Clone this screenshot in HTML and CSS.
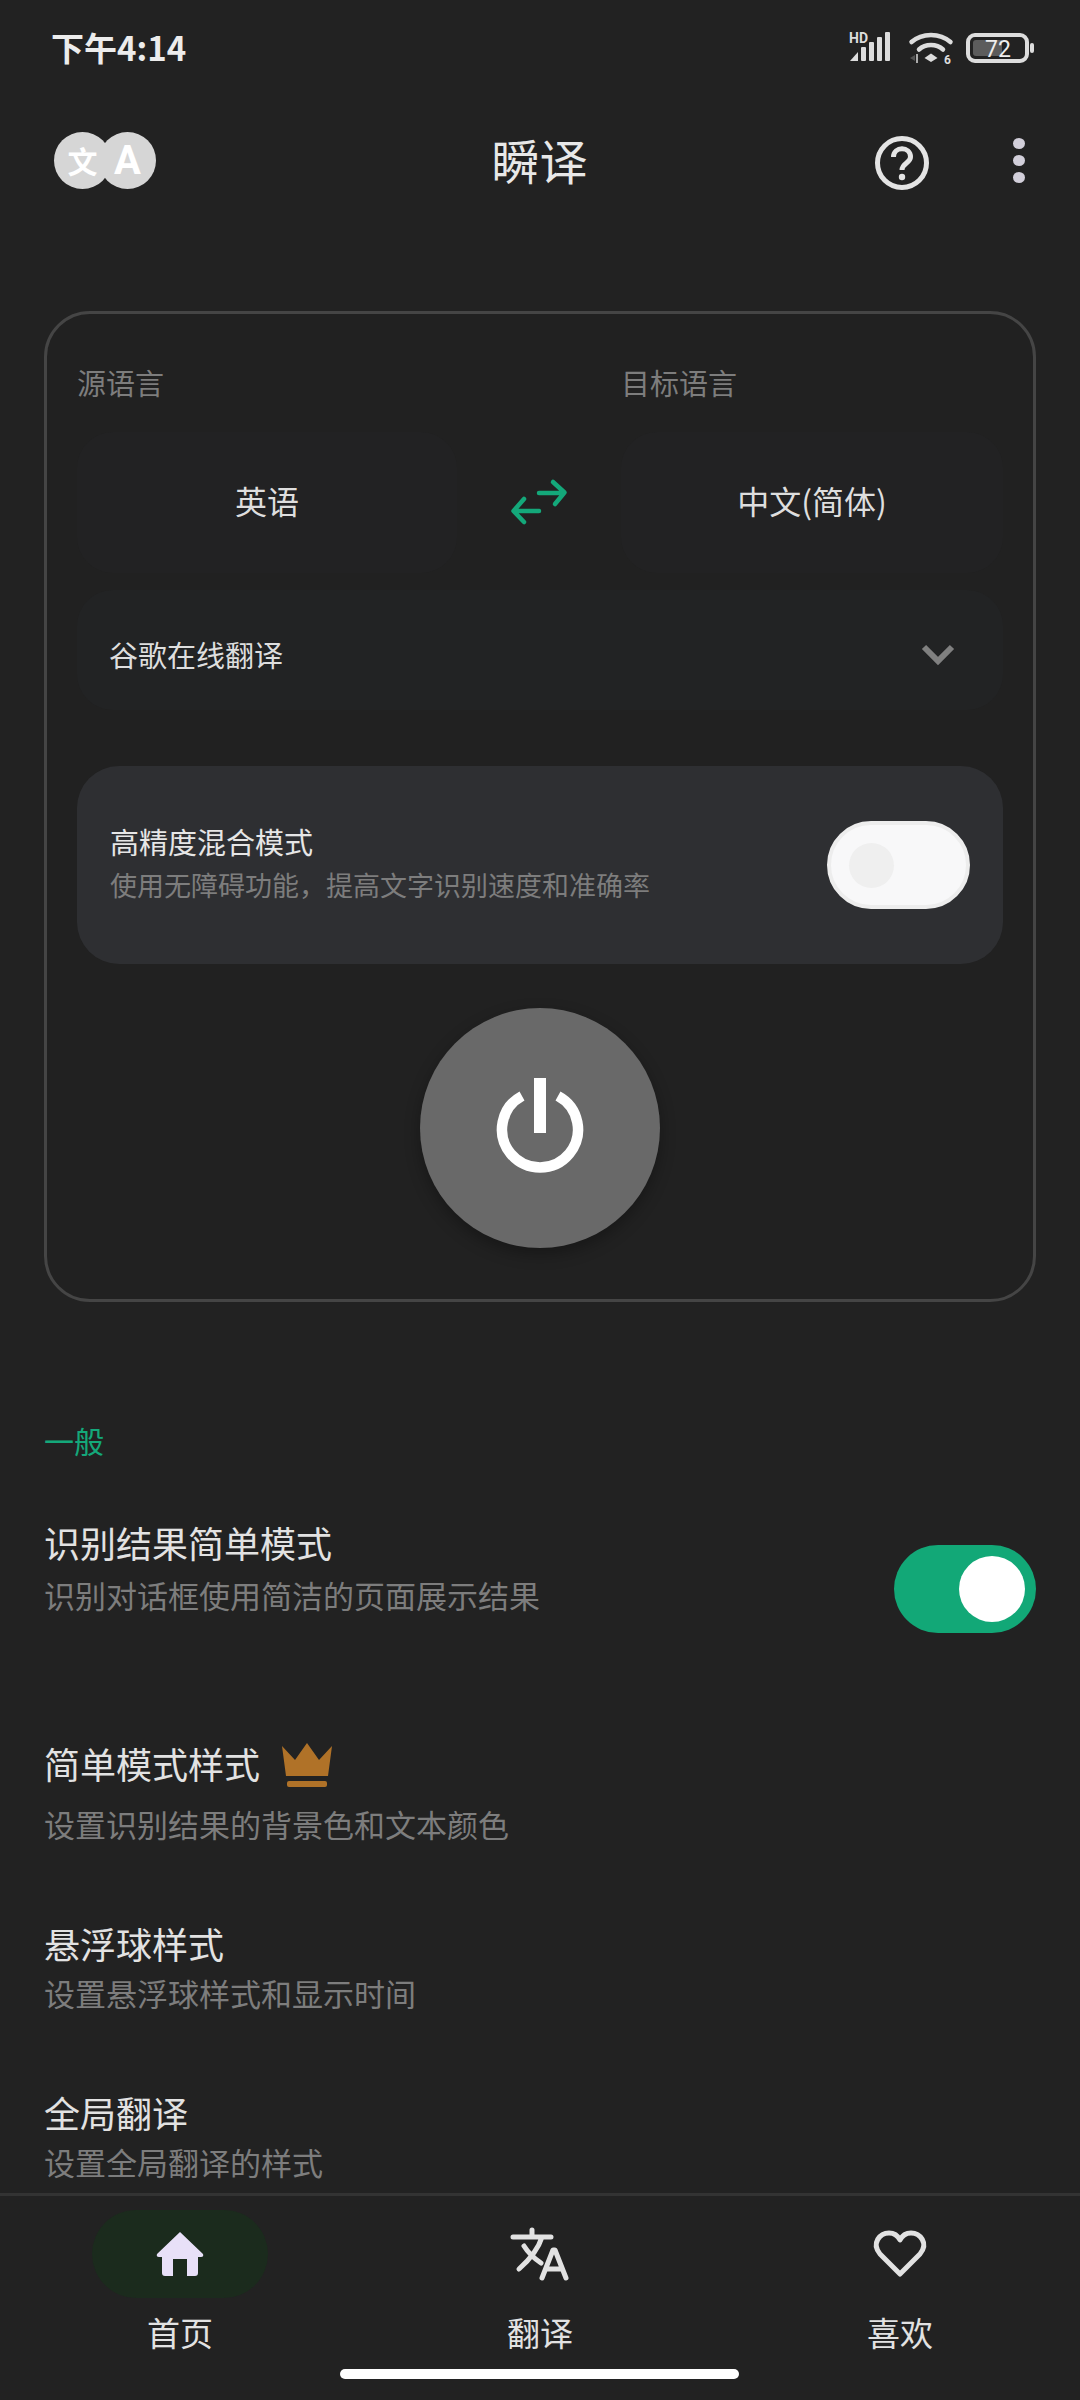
FILE: index.html
```html
<!DOCTYPE html>
<html lang="zh-CN">
<head>
  <meta charset="UTF-8" />
  <meta name="viewport" content="width=device-width, initial-scale=1" />
  <title>瞬译</title>
  <link rel="stylesheet" href="styles.css">
</head>
<body>
  <div class="status-bar">
    <span class="status-time">下午4:14</span>
    <div class="status-icons">
      <svg class="icon-signal" width="42" height="32" viewBox="0 0 42 32">
        <text x="0" y="11" class="hd-text">HD</text>
        <path d="M1 29 L9 20 V29 Z" fill="#ddd" />
        <rect x="12" y="15" width="5" height="14" rx="1" fill="#ddd" />
        <rect x="20" y="10" width="5" height="19" rx="1" fill="#ddd" />
        <rect x="28" y="5" width="5" height="24" rx="1" fill="#ddd" />
        <rect x="36" y="0" width="5" height="29" rx="1" fill="#ddd" />
      </svg>
      <svg class="icon-wifi" width="44" height="34" viewBox="0 0 44 34">
        <path d="M2.5 11 C13 1.5 31 1.5 41.5 11" fill="none" stroke="#ddd" stroke-width="4.5" stroke-linecap="round" />
        <path d="M10 18.5 C16.5 12.5 27.5 12.5 34 18.5" fill="none" stroke="#ddd" stroke-width="4.5" stroke-linecap="round" />
        <path d="M15.5 24 L22 19.5 L28.5 24 L22 28 Z" fill="#ddd" transform="translate(0 3)" />
        <path d="M1 27 L6 24 V30 Z" fill="#555" />
        <rect x="7" y="23" width="2" height="9" fill="#aaa" />
        <text x="35" y="33" class="wifi-six">6</text>
      </svg>
      <svg class="icon-battery" width="69" height="30" viewBox="0 0 69 30">
        <rect x="2" y="2" width="59" height="26" rx="7" fill="none" stroke="#ddd" stroke-width="4" />
        <path d="M10 7 H36 V23 H10 Q7 23 7 20 V10 Q7 7 10 7 Z" fill="#5c5c5c" />
        <rect x="64" y="10" width="4" height="10" rx="2" fill="#ddd" />
        <text x="32" y="24" class="battery-text">72</text>
      </svg>
    </div>
  </div>

  <header class="top-bar">
    <div class="app-logo">
      <span class="logo-dot">文</span>
      <span class="logo-dot logo-dot-latin">A</span>
    </div>
    <h1 class="app-title">瞬译</h1>
    <div class="top-actions">
      <svg class="help-icon" width="56" height="56" viewBox="0 0 56 56">
        <circle cx="28" cy="28" r="24.5" fill="none" stroke="#e4e4e4" stroke-width="5" />
        <path d="M19.5 22 C19.5 11 36.5 11 36.5 22 C36.5 28 28 28 28 35" fill="none" stroke="#e4e4e4" stroke-width="5" />
        <circle cx="28" cy="42" r="3.2" fill="#e4e4e4" />
      </svg>
      <div class="more-dots"><i></i><i></i><i></i></div>
    </div>
  </header>

  <main class="main">
    <section class="panel">
      <div class="lang-labels">
        <span>源语言</span>
        <span></span>
        <span>目标语言</span>
      </div>
      <div class="lang-row">
        <div class="lang-pill">英语</div>
        <svg class="swap-icon" width="60" height="48" viewBox="0 0 60 48">
          <path d="M30 15 H55 M44 4 L55.5 14.5 L46 26" fill="none" stroke="#14a87a" stroke-width="4.5" stroke-linecap="round" stroke-linejoin="round" />
          <path d="M30 33 H5 M15 21 L4.5 33 L15 44" fill="none" stroke="#14a87a" stroke-width="4.5" stroke-linecap="round" stroke-linejoin="round" />
        </svg>
        <div class="lang-pill">中文(简体)</div>
      </div>
      <div class="engine-select">
        <span>谷歌在线翻译</span>
        <svg width="34" height="22" viewBox="0 0 34 22">
          <path d="M3 4 L17 18 L31 4" fill="none" stroke="#808080" stroke-width="6" />
        </svg>
      </div>
      <div class="mix-card">
        <div class="mix-text">
          <div class="mix-title">高精度混合模式</div>
          <div class="mix-sub">使用无障碍功能&#xFF0C;提高文字识别速度和准确率</div>
        </div>
        <div class="switch-off"><i></i></div>
      </div>
      <div class="power-btn">
        <svg width="100" height="100" viewBox="0 0 100 100">
          <path d="M32 18 A38 38 0 1 0 68 18" fill="none" stroke="#fff" stroke-width="10.5" />
          <rect x="44" y="0" width="12" height="55" fill="#fff" />
        </svg>
      </div>
    </section>

    <div class="section-title">一般</div>

    <div class="setting setting-first">
      <div>
        <div class="setting-title">识别结果简单模式</div>
        <div class="setting-sub setting-sub-first">识别对话框使用简洁的页面展示结果</div>
      </div>
      <div class="switch-on"><i></i></div>
    </div>

    <div class="setting setting-crown">
      <div>
        <div class="setting-title">
          简单模式样式
          <svg class="crown" width="50" height="44" viewBox="0 0 50 44">
            <path d="M0 3 L13 17 L25 0 L37 17 L50 3 L46 33 H4 Z" fill="#b07228" />
            <rect x="5" y="38" width="40" height="6" rx="2" fill="#b07228" />
          </svg>
        </div>
        <div class="setting-sub setting-sub-gap">设置识别结果的背景色和文本颜色</div>
      </div>
    </div>

    <div class="setting setting-plain">
      <div>
        <div class="setting-title">悬浮球样式</div>
        <div class="setting-sub">设置悬浮球样式和显示时间</div>
      </div>
    </div>

    <div class="setting setting-plain">
      <div>
        <div class="setting-title">全局翻译</div>
        <div class="setting-sub">设置全局翻译的样式</div>
      </div>
    </div>
  </main>

  <nav class="tab-bar">
    <div class="tabs">
      <div class="tab">
        <div class="tab-icon tab-icon-active">
          <svg width="48" height="44" viewBox="0 0 48 44">
            <path d="M24 0 L47 22 Q48 25 45 25 H42 V41 Q42 44 39 44 H31 V27 H17 V44 H9 Q6 44 6 41 V25 H3 Q0 25 1 22 Z" fill="#e8e0f8" />
          </svg>
        </div>
        <span>首页</span>
      </div>
      <div class="tab">
        <div class="tab-icon">
          <svg class="translate-icon" width="56" height="52" viewBox="0 0 56 52">
            <path d="M2 9 H40 M21 2 V9 M31 9 C27 22 17 33 8 41 M13 18 C18 26 24 31 30 35" fill="none" stroke="#e2e2e2" stroke-width="5" stroke-linecap="round" />
            <path d="M31 50 L42 22 H44 L55 50 M35 41 H51" fill="none" stroke="#e2e2e2" stroke-width="5" stroke-linecap="round" stroke-linejoin="round" />
          </svg>
        </div>
        <span>翻译</span>
      </div>
      <div class="tab">
        <div class="tab-icon">
          <svg width="52" height="48" viewBox="0 0 52 48">
            <path d="M26 44 L6 24 C-3 13 6 3 15 3 C20 3 24 6 26 10 C28 6 32 3 37 3 C46 3 55 13 46 24 Z" fill="none" stroke="#e2e2e2" stroke-width="5" stroke-linejoin="round" />
          </svg>
        </div>
        <span>喜欢</span>
      </div>
    </div>
    <div class="home-indicator"></div>
  </nav>
</body>
</html>
```

FILE: styles.css
```css
* {
  box-sizing: border-box;
}
html, body {
  margin: 0;
  padding: 0;
}
body {
  width: 1080px;
  height: 2400px;
  display: flex;
  flex-direction: column;
  overflow: hidden;
  background: #222222;
  color: #e6e6e6;
  font-family: "Noto Sans CJK SC", "Noto Sans", sans-serif;
}
svg {
  overflow: visible;
}

/* status bar */
.status-bar {
  height: 100px;
  flex: none;
  display: flex;
  align-items: center;
  justify-content: space-between;
  padding: 0 45px 0 51px;
}
.status-time {
  margin-bottom: 6px;
  font-family: "Noto Sans CJK SC", Roboto, sans-serif;
  font-size: 33px;
  line-height: 44px;
  font-weight: 700;
  color: #ececec;
}
.status-icons {
  display: flex;
  align-items: center;
  gap: 15px;
  margin-bottom: 4px;
}
.icon-wifi {
  margin: 0 -2px 0 3px;
}
.hd-text {
  font-family: Roboto, sans-serif;
  font-size: 14px;
  font-weight: 700;
  fill: #ddd;
}
.wifi-six {
  font-family: Roboto, sans-serif;
  font-size: 12px;
  font-weight: 700;
  fill: #ddd;
}
.battery-text {
  font-family: Roboto, sans-serif;
  font-size: 23px;
  fill: #eee;
  text-anchor: middle;
}

/* top bar */
.top-bar {
  height: 120px;
  flex: none;
  display: grid;
  grid-template-columns: 1fr auto 1fr;
  align-items: center;
  padding: 0 55px 0 54px;
}
.app-logo {
  display: flex;
}
.logo-dot {
  width: 57px;
  height: 57px;
  border-radius: 50%;
  background: #d6d6d6;
  color: #fff;
  display: flex;
  align-items: center;
  justify-content: center;
  font-size: 30px;
  line-height: 40px;
  font-weight: 700;
}
.logo-dot-latin {
  margin-left: -12px;
  padding-top: 2px;
  font-family: Roboto, sans-serif;
  font-size: 40px;
}
.app-title {
  margin: 0 0 2px;
  font-size: 48px;
  line-height: 64px;
  font-weight: 400;
  color: #e8e8e8;
}
.top-actions {
  display: flex;
  align-items: center;
  justify-content: flex-end;
  gap: 83px;
}
.help-icon {
  margin-top: 6px;
}
.more-dots {
  display: flex;
  flex-direction: column;
  gap: 6px;
}
.more-dots i {
  width: 12px;
  height: 11px;
  border-radius: 50%;
  background: #d2cfda;
}

/* main */
.main {
  flex: 1;
  min-height: 0;
  padding: 91px 44px 0;
}
.panel {
  height: 991px;
  border: 3px solid #454545;
  border-radius: 46px;
  background: #212121;
  padding: 50px 30px 0 30px;
}
.lang-labels {
  display: grid;
  grid-template-columns: 380px 164px 1fr;
  font-size: 29px;
  line-height: 36px;
  color: #7d7d7d;
}
.lang-row {
  display: grid;
  grid-template-columns: 380px 164px 1fr;
  align-items: center;
  margin-top: 32px;
}
.lang-pill {
  height: 141px;
  display: flex;
  align-items: center;
  justify-content: center;
  padding-bottom: 6px;
  border-radius: 36px;
  background: #222223;
  font-size: 32px;
  color: #dedede;
}
.swap-icon {
  justify-self: center;
  margin-bottom: 2px;
}
.engine-select {
  height: 120px;
  margin-top: 17px;
  display: flex;
  align-items: center;
  justify-content: space-between;
  padding: 7px 48px 0 32px;
  border-radius: 36px;
  background: #222324;
  font-size: 29px;
  color: #dedede;
}
.mix-card {
  height: 198px;
  margin-top: 56px;
  display: flex;
  align-items: center;
  justify-content: space-between;
  padding: 0 33px;
  border-radius: 42px;
  background: #2e2f32;
}
.mix-text {
  margin-bottom: 6px;
}
.mix-title {
  font-size: 29px;
  line-height: 42px;
  color: #e6e6e6;
}
.mix-sub {
  margin-top: 3px;
  font-size: 27px;
  line-height: 39px;
  color: #7d7d7d;
}
.switch-off {
  width: 143px;
  height: 88px;
  flex: none;
  display: flex;
  align-items: center;
  padding-left: 18px;
  border: 4px solid #ededed;
  border-radius: 44px;
  background: #f8f8f9;
}
.switch-off i {
  width: 45px;
  height: 45px;
  border-radius: 50%;
  background: #efefef;
}
.power-btn {
  width: 240px;
  height: 240px;
  margin: 44px auto 0;
  display: flex;
  align-items: center;
  justify-content: center;
  border-radius: 50%;
  background: #696969;
  box-shadow: 0 6px 16px rgba(0,0,0,0.3);
}

/* settings list */
.section-title {
  margin-top: 118px;
  font-size: 30px;
  line-height: 40px;
  color: #14a87a;
}
.setting {
  display: flex;
  justify-content: space-between;
}
.setting-first {
  margin-top: 57px;
}
.setting-crown {
  margin-top: 105px;
}
.setting-plain {
  margin-top: 69px;
}
.setting-title {
  display: flex;
  align-items: center;
  gap: 22px;
  font-size: 36px;
  line-height: 50px;
  color: #e2e2e2;
}
.crown {
  margin-top: 4px;
}
.setting-sub {
  font-size: 31px;
  line-height: 50px;
  color: #7d7d7d;
}
.setting-sub-first {
  margin-top: 3px;
}
.setting-sub-gap {
  margin-top: 11px;
}
.switch-on {
  width: 142px;
  height: 88px;
  flex: none;
  margin-top: 28px;
  display: flex;
  align-items: center;
  justify-content: flex-end;
  padding-right: 11px;
  border-radius: 44px;
  background: #12a877;
}
.switch-on i {
  width: 66px;
  height: 66px;
  border-radius: 50%;
  background: #fff;
}

/* tab bar */
.tab-bar {
  height: 207px;
  flex: none;
  border-top: 3px solid #333333;
  padding-top: 14px;
}
.tabs {
  display: grid;
  grid-template-columns: repeat(3, 1fr);
}
.tab {
  display: flex;
  flex-direction: column;
  align-items: center;
  font-size: 33px;
  line-height: 40px;
  color: #e2e2e2;
}
.tab-icon {
  width: 176px;
  height: 88px;
  margin-bottom: 14px;
  display: flex;
  align-items: center;
  justify-content: center;
  border-radius: 44px;
}
.tab-icon-active {
  background: #1b2b1d;
}
.translate-icon {
  margin-right: 3px;
}
.home-indicator {
  width: 399px;
  height: 10px;
  margin: 17px 0 0 340px;
  border-radius: 5px;
  background: #fff;
}
```
